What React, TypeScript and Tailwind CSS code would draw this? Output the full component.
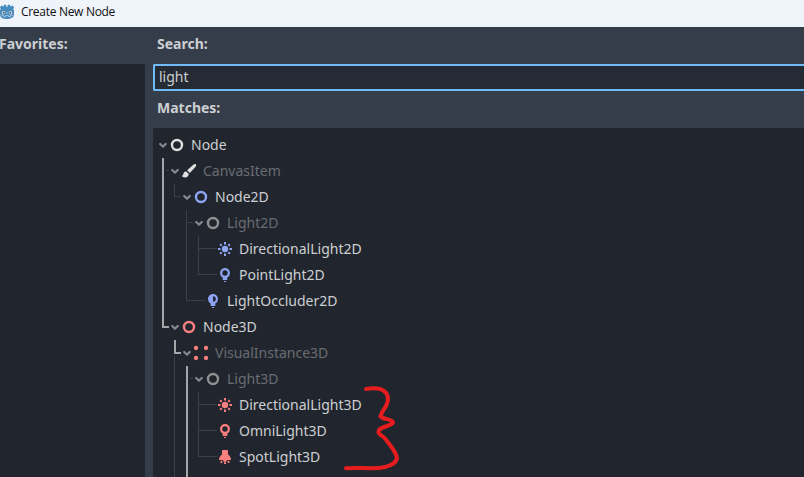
import React from "react";

type Kind = "ring" | "brush" | "sun" | "bulb" | "occluder" | "dots" | "spot";

interface Row {
  label: string;
  kind: Kind;
  color: string;
  indent: string;
  open?: boolean;
  dim?: boolean;
}

const WHITE = "#e0e0e0";
const BLUE = "#8da5f3";
const RED = "#fc7f7f";
const GRAY = "#8f9092";

const rows: Row[] = [
  { label: "Node", kind: "ring", color: WHITE, indent: "pl-1", open: true },
  { label: "CanvasItem", kind: "brush", color: WHITE, indent: "pl-4", open: true, dim: true },
  { label: "Node2D", kind: "ring", color: BLUE, indent: "pl-7", open: true },
  { label: "Light2D", kind: "ring", color: GRAY, indent: "pl-10", open: true, dim: true },
  { label: "DirectionalLight2D", kind: "sun", color: BLUE, indent: "pl-13" },
  { label: "PointLight2D", kind: "bulb", color: BLUE, indent: "pl-13" },
  { label: "LightOccluder2D", kind: "occluder", color: BLUE, indent: "pl-10" },
  { label: "Node3D", kind: "ring", color: RED, indent: "pl-4", open: true },
  { label: "VisualInstance3D", kind: "dots", color: RED, indent: "pl-7", open: true, dim: true },
  { label: "Light3D", kind: "ring", color: GRAY, indent: "pl-10", open: true, dim: true },
  { label: "DirectionalLight3D", kind: "sun", color: RED, indent: "pl-13" },
  { label: "OmniLight3D", kind: "bulb", color: RED, indent: "pl-13" },
  { label: "SpotLight3D", kind: "spot", color: RED, indent: "pl-13" },
];

function NodeIcon({ kind, color }: { kind: Kind; color: string }) {
  return (
    <svg width="16" height="16" viewBox="0 0 16 16" fill={color} className="shrink-0">
      {kind === "ring" && <circle cx="8" cy="8" r="5" fill="none" stroke={color} strokeWidth="2.400" />}
      {kind === "brush" && (
        <path d="M14.700 1.300c-.6-.6-1.500-.4-2.100.1L6.100 7.200l2.700 2.700 6-6.500c.5-.6.5-1.500-.1-2.100zM5.200 8.500c-1.500-.2-2.400.7-2.700 1.900-.2 1-.7 2-1.700 2.700 1 1.700 4.400 1.900 5.900.4 1.100-1.100 1.200-2.200.8-2.900z" />
      )}
      {kind === "sun" && (
        <>
          <circle cx="8" cy="8" r="3.200" />
          <path
            d="M8 1v2.500M8 12.500V15M1 8h2.500M12.500 8H15M3.200 3.200l1.500 1.500M11.300 11.300l1.500 1.500M12.800 3.200l-1.500 1.500M4.700 11.300l-1.500 1.500"
            fill="none"
            stroke={color}
            strokeWidth="2"
          />
        </>
      )}
      {kind === "bulb" && (
        <path d="M8 1a5 5 0 0 0-5 5 5 5 0 0 0 2.700 4.500V13h4.600v-2.500A5 5 0 0 0 13 6a5 5 0 0 0-5-5zm0 2.300a2.700 2.700 0 0 1 0 5.400 2.700 2.700 0 0 1 0-5.400zM7 14v1h2v-1z" fillRule="evenodd" />
      )}
      {kind === "occluder" && (
        <path d="M8 1a5 5 0 0 0-5 5 5 5 0 0 0 2.700 4.500V13h4.600v-2.500A5 5 0 0 0 13 6a5 5 0 0 0-5-5zm0 2.200a2.800 2.800 0 0 1 0 5.600zM7 14v1h2v-1z" fillRule="evenodd" />
      )}
      {kind === "dots" && (
        <>
          <circle cx="3" cy="3" r="2.150" />
          <circle cx="13" cy="3" r="2.150" />
          <circle cx="3" cy="13" r="2.150" />
          <circle cx="13" cy="13" r="2.150" />
        </>
      )}
      {kind === "spot" && (
        <path d="M6 1a1 1 0 0 0-1 1v3.500C3.200 6.500 2 8.500 2 11h4a2 2 0 0 0 4 0h4c0-2.500-1.200-4.500-3-5.500V2a1 1 0 0 0-1-1zM4.100 11.600l-1 1.700 1.700 1 1-1.700zM11.900 11.600l1 1.700-1.700 1-1-1.700zM7 13.200v1.900h2v-1.900z" />
      )}
    </svg>
  );
}

function TreeRow({ row }: { row: Row }) {
  return (
    <div className={`flex h-[26px] items-center ${row.indent}`}>
      <svg width="12" height="12" viewBox="0 0 12 12" className="shrink-0">
        {row.open && <path d="M3.200 5l2.800 2.600L8.800 5" fill="none" stroke="#85888d" strokeWidth="2.200" strokeLinecap="round" strokeLinejoin="round" />}
      </svg>
      <NodeIcon kind={row.kind} color={row.color} />
      <span className={`pl-1.5 text-sm leading-[26px] ${row.dim ? "text-[#696c72]" : "text-[#cdcfd2]"}`}>{row.label}</span>
    </div>
  );
}

/* Branch guides: bright for the selected path, faint for the others. */
function Guides() {
  return (
    <svg width="80" height="349" viewBox="153 128 80 349" className="absolute left-0 top-0" fill="none">
      <g stroke="#3c4047" shapeRendering="crispEdges">
        <path d="M166 170.500h3M174.500 184v12.500H181M186.500 210v90.500H205M186 222.500h7M198.500 236v38.500H217M198 248.500h19" />
        <path d="M174.500 356v121M190 378.500h3M198.500 392v64.500H217M198 404.500h19M198 430.500h19" />
      </g>
      <path d="M163 158v169h6M175 340v13h6M187 366v111" stroke="#a4a6a9" strokeWidth="2" shapeRendering="crispEdges" />
    </svg>
  );
}

function GodotLogo() {
  return (
    <svg width="16" height="16" viewBox="0 0 16 16" className="-ml-px shrink-0">
      <path d="M5.300.4l2 .5v1.800h1.400V.900l2-.5.9 2.200 1.700-1 1.800 1.700-1 1.900.9.700v4.800c0 2.600-3 4.300-7 4.300s-7-1.700-7-4.300V5.900l.9-.7-1-1.900 1.800-1.700 1.700 1z" fill="#478cbf" />
      <circle cx="4.500" cy="8.700" r="1.700" fill="#e8f1f7" />
      <circle cx="11.500" cy="8.700" r="1.700" fill="#e8f1f7" />
      <circle cx="4.700" cy="8.800" r="1" fill="#414b55" />
      <circle cx="11.300" cy="8.800" r="1" fill="#414b55" />
      <path d="M8 8v2M1.500 11l3 .4v1.200h2v-1h3v1h2v-1.200l3-.4" stroke="#c2d9e8" strokeWidth=".7" fill="none" />
    </svg>
  );
}

export default function App() {
  return (
    <div className="relative flex h-[477px] w-[804px] flex-col overflow-hidden bg-[#363d4a] font-['Noto_Sans',sans-serif] text-sm text-[#cdcfd2]">
      <header className="flex h-[27px] shrink-0 items-center bg-[#eff4fa] pb-[3px]">
        <GodotLogo />
        <span className="pl-1.5 font-['Open_Sans',sans-serif] text-xs tracking-[-0.3px] text-[#111]">Create New Node</span>
      </header>
      <main className="flex min-h-0 flex-1 gap-2">
        <aside className="flex w-[145px] shrink-0 flex-col">
          <h2 className="-ml-px h-[37px] font-bold leading-[34px]">Favorites:</h2>
          <div className="flex-1 rounded-tr-[2px] bg-[#21262e]" />
        </aside>
        <section className="flex min-w-0 flex-1 flex-col">
          <h2 className="h-[37px] pl-1 font-bold leading-[34px]">Search:</h2>
          <div className="h-[27px] shrink-0 rounded-l-[2px] border-2 border-r-0 border-[#70bafa] bg-[#252b34] pl-1 leading-[22px]">light</div>
          <h2 className="h-[37px] pl-1 font-bold leading-[34px]">Matches:</h2>
          <div className="relative min-h-0 flex-1 overflow-hidden rounded-tl-[2px] bg-[#21262e] pt-1">
            <Guides />
            {rows.map((row) => (
              <TreeRow key={row.label} row={row} />
            ))}
          </div>
        </section>
      </main>
      <svg width="90" height="102" viewBox="0 0 90 102" className="absolute left-[330px] top-[375px]">
        <path
          d="M36 14c7-1.300 14-1 18 2 5 3.500 5 8 2.500 14-2 4-5.500 8-6 11.500 3 3 12.500 2.500 12.500 6-2 4-14.500 4-14.500 9.500 0 3 5 4 7 7 4 6 11 12.500 11.500 19.500-2 6-10 9-18 9.500-10 .5-22-.3-33 .2"
          fill="none"
          stroke="#e71c1e"
          strokeWidth="4"
          strokeLinecap="round"
          strokeLinejoin="round"
        />
      </svg>
    </div>
  );
}
